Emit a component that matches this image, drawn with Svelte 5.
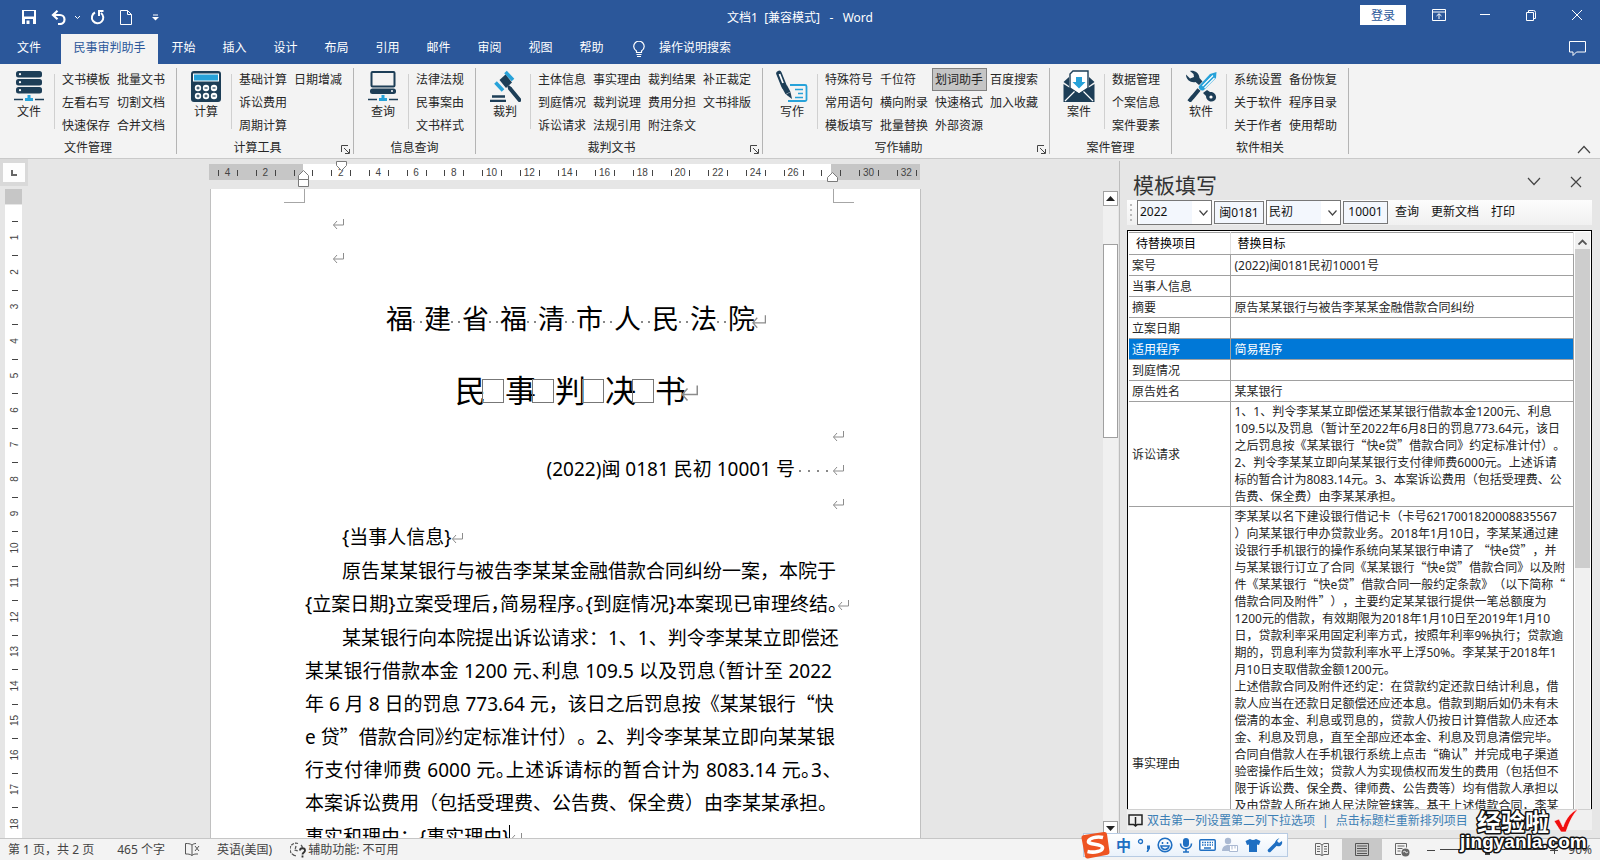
<script>
    const tabs = ['开始', '插入', '设计', '布局', '引用', '邮件', '审阅', '视图', '帮助']

    // columns are filled top to bottom, three commands each
    const groups = [
        {icon: 'server', name: '文件', title: '文件管理', items: ['文书模板', '左看右写', '快速保存', '批量文书', '切割文档', '合并文档']},
        {icon: 'calc', name: '计算', title: '计算工具', launcher: true, items: ['基础计算', '诉讼费用', '周期计算', '日期增减', '', '']},
        {icon: 'computer', name: '查询', title: '信息查询', items: ['法律法规', '民事案由', '文书样式']},
        {icon: 'gavel', name: '裁判', title: '裁判文书', launcher: true, items: ['主体信息', '到庭情况', '诉讼请求', '事实理由', '裁判说理', '法规引用', '裁判结果', '费用分担', '附注条文', '补正裁定', '文书排版', '']},
        {icon: 'pen', name: '写作', title: '写作辅助', launcher: true, items: ['特殊符号', '常用语句', '模板填写', '千位符', '横向附录', '批量替换', '划词助手', '快速格式', '外部资源', '百度搜索', '加入收藏', '']},
        {icon: 'mail', name: '案件', title: '案件管理', items: ['数据管理', '个案信息', '案件要素']},
        {icon: 'tools', name: '软件', title: '软件相关', items: ['系统设置', '关于软件', '关于作者', '备份恢复', '程序目录', '使用帮助']},
    ]

    const hMarks = []
    for (let i = -2; i <= 16; i++) hMarks.push({x: 94 + i * 37.7, n: Math.abs(i * 2)})
    const vMarks = []
    for (let i = 1; i <= 18; i++) vMarks.push({y: 14 + i * 34.5, n: i})

    // "~" before a punctuation mark sets it half width
    const claims = [
        '某某银行向本院提出诉讼请求：1、1、判令李某某立即偿还',
        '某某银行借款本金 1200 元~、利息 109.5 以及罚息~（暂计至 2022',
        '年 6 月 8 日的罚息 773.64 元，该日之后罚息按《某某银行“快',
        'e 贷”借款合同~》约定标准计付）。2、判令李某某立即向某某银',
        '行支付律师费 6000 元~。上述诉请标的暂合计为 8083.14 元~。3~、',
        '本案诉讼费用（包括受理费、公告费、保全费）由李某某承担。',
    ]

    const rows = [
        {key: '案号', lines: ['(2022)闽0181民初10001号']},
        {key: '当事人信息', lines: ['']},
        {key: '摘要', lines: ['原告某某银行与被告李某某金融借款合同纠纷']},
        {key: '立案日期', lines: ['']},
        {key: '适用程序', lines: ['简易程序']},
        {key: '到庭情况', lines: ['']},
        {key: '原告姓名', lines: ['某某银行']},
        {key: '诉讼请求', lines: [
            '1、1、判令李某某立即偿还某某银行借款本金1200元、利息',
            '109.5以及罚息（暂计至2022年6月8日的罚息773.64元，该日',
            '之后罚息按《某某银行“快e贷”借款合同》约定标准计付）。',
            '2、判令李某某立即向某某银行支付律师费6000元。上述诉请',
            '标的暂合计为8083.14元。3、本案诉讼费用（包括受理费、公',
            '告费、保全费）由李某某承担。']},
        {key: '事实理由', long: true, lines: [
            '李某某以名下建设银行借记卡（卡号6217001820008835567',
            '）向某某银行申办贷款业务。2018年1月10日，李某某通过建',
            '设银行手机银行的操作系统向某某银行申请了 “快e贷”，并',
            '与某某银行订立了合同《某某银行“快e贷”借款合同》以及附',
            '件《某某银行“快e贷”借款合同一般约定条款》（以下简称“',
            '借款合同及附件”），主要约定某某银行提供一笔总额度为',
            '1200元的借款，有效期限为2018年1月10日至2019年1月10',
            '日，贷款利率采用固定利率方式，按照年利率9%执行；贷款逾',
            '期的，罚息利率为贷款利率水平上浮50%。李某某于2018年1',
            '月10日支取借款金额1200元。',
            '上述借款合同及附件还约定：在贷款约定还款日结计利息，借',
            '款人应当在还款日足额偿还应还本息。借款到期后如仍未有未',
            '偿清的本金、利息或罚息的，贷款人仍按日计算借款人应还本',
            '金、利息及罚息，直至全部应还本金、利息及罚息清偿完毕。',
            '合同自借款人在手机银行系统上点击“确认”并完成电子渠道',
            '验密操作后生效；贷款人为实现债权而发生的费用（包括但不',
            '限于诉讼费、保全费、律师费、公告费等）均有借款人承担以',
            '及由贷款人所在地人民法院管辖等。基于上述借款合同，李某']},
    ]

    let helper = $state('划词助手')
    let selected = $state('适用程序')
    let year = $state('2022')
    let court = $state('闽0181')
    let kind = $state('民初')
    let number = $state('10001')
</script>

{#snippet rich(text)}{#each text.split(/(~.|[“”])/) as part}{#if part.startsWith('~')}<span class="half">{part.slice(1)}</span>{:else if part === '“' || part === '”'}<span class="cjk">{part}</span>{:else}{part}{/if}{/each}{/snippet}

{#snippet mark()}<svg class="mark" width="12" height="12" viewBox="0 0 12 12"><path d="M11.5 1v6H1.5M5 3 1.5 7 5 11" fill="none" stroke="#8c8c8c" /></svg>{/snippet}

{#snippet icon(name)}
    <svg width="32" height="32" viewBox="0 0 32 32">
        {#if name === 'server'}
            {#each [1, 9, 17] as y}
                <rect x="3" y={y} width="26" height="6.5" rx="2.5" fill="#1d3e57" />
                <circle cx="7" cy={y + 3.2} r="1.1" fill="#fff" />
            {/each}
            <path d="M1 29.5h9M22 29.5h9" stroke="#1d3e57" stroke-width="1.4" />
            <path d="M12 28h2.5v-3h3v3H20v3h-8z" fill="#27a2d9" />
        {:else if name === 'calc'}
            <rect x="1" y="1" width="30" height="31" rx="3" fill="#1d3e57" />
            <rect x="3.5" y="4" width="25" height="7" fill="#27a2d9" stroke="#fff" />
            {#each [8, 16, 24] as x}
                {#each [18, 26] as y}
                    <circle cx={x} cy={y} r="3.2" fill="#fff" />
                    <path d="M{x - 1.5} {y}h3" stroke="#1d3e57" stroke-width="1.2" />
                {/each}
            {/each}
            <path d="M8 16.5v3M8 24.5v3M16 24.5v3" stroke="#1d3e57" />
        {:else if name === 'computer'}
            <rect x="4.5" y="2" width="23" height="14.5" rx="1" fill="#f3f3f3" stroke="#1d3e57" stroke-width="2" />
            <rect x="3" y="18.5" width="26" height="5.5" rx="2.5" fill="#1d3e57" />
            <circle cx="25" cy="21" r="1" fill="#fff" />
            <path d="M1 29.5h9M22 29.5h9" stroke="#1d3e57" stroke-width="1.4" />
            <path d="M12 28h2.5v-3h3v3H20v3h-8z" fill="#27a2d9" />
        {:else if name === 'gavel'}
            <path d="M16.5 2l7.500 8M6.500 12.500l7.500 8" stroke="#27a2d9" stroke-width="3.6" />
            <path d="M10.500 10 16.500 4.500l6.500 8-6 5.500z" fill="#1d3e57" />
            <path d="M19 16l3 3" stroke="#1d3e57" stroke-width="2.5" />
            <path d="M21 18.500 30.500 30" stroke="#1d3e57" stroke-width="4" stroke-linecap="round" />
            <path d="M3 26.5h13M1 31h16" stroke="#1d3e57" stroke-width="2.6" />
        {:else if name === 'pen'}
            <path d="M14 15h15a1.5 1.5 0 0 1 1.5 1.5v13A1.5 1.5 0 0 1 29 31H12" fill="none" stroke="#27a2d9" stroke-width="1.8" />
            <path d="M19 19.5h8M22 23.5h5M19 27.5h8" stroke="#27a2d9" stroke-width="1.4" />
            <path d="M3 3.5 8 16" stroke="#1d3e57" stroke-width="5.6" stroke-linecap="round" />
            <path d="M3.500 4 7 13" stroke="#fff" stroke-width="1.8" />
            <path d="M8.500 16.500 12 23" stroke="#1d3e57" stroke-width="5.6" />
            <path d="M10 24.500 14.500 22l1.500 7z" fill="#1d3e57" />
        {:else if name === 'mail'}
            <path d="M.5 12 6 7v9zM31.500 12 26 7v9z" fill="#1d3e57" />
            <path d="M7 18V4l3-3h15v17l-9 6z" fill="#fff" stroke="#1d3e57" stroke-width="1.4" />
            <path d="M13 7h6v5h3.500L16 18.500 9.500 12H13z" fill="#27a2d9" />
            <path d="M.5 14 16 23.500 31.500 14v18H.5z" fill="#1d3e57" />
            <path d="M2 31l9.500-9.500M30 31l-9.500-9.500" stroke="#fff" stroke-width="1.2" />
        {:else}
            <path d="M5 1c4-1 9 1.500 9.500 7l3 3.500-3.500 3.500-3.500-3C6 13 1 10 1 4.500l4 4L9 7 8.500 4z" fill="#1d3e57" />
            <path d="M22 20 25 22c4-.5 6.500 3 6 6-.5 3-4 4.500-7 3s-3-5-3-5l-3-3z" fill="#1d3e57" />
            <circle cx="26" cy="27" r="1.600" fill="#fff" />
            <path d="M14 19.500 7 28M4 31.500l4-5" stroke="#1d3e57" stroke-width="4" />
            <path d="M14 16 25 4l6.500-2L31 8 19 20c-1.500 1-3 .5-4-.5s-1.800-2.200-1-3.500z" fill="#27a2d9" />
            <path d="M17.500 16 28 5.500M19.500 18 29.500 8" stroke="#fff" stroke-width="1.200" />
        {/if}
    </svg>
{/snippet}

<div class="window">
    <header class="titlebar">
        <div class="quick">
            <button aria-label="保存"><svg width="14" height="14" viewBox="0 0 14 14"><path d="M0 0h14v14H0z" fill="#fff" /><path d="M2 1h10v5.500H2zM3 9h8v5H3z" fill="#2b579a" /><path d="M4.500 10.500h3V14h-3z" fill="#fff" /></svg></button>
            <button aria-label="撤消"><svg width="16" height="15" viewBox="0 0 16 15"><path d="M2 5h7a4.500 4.500 0 0 1 0 9H7M6.500.8 2 5l4.500 4.200" fill="none" stroke="#fff" stroke-width="2.200" /></svg></button>
            <button class="small" aria-label="撤消列表"><svg width="7" height="5" viewBox="0 0 7 5"><path d="M1 1l2.500 2.500L6 1" fill="none" stroke="#fff" /></svg></button>
            <button aria-label="重复"><svg width="15" height="15" viewBox="0 0 15 15"><path d="M5 2.500A5.700 5.700 0 1 0 11 3" fill="none" stroke="#fff" stroke-width="2" /><path d="M8 1h5.500M9 0v6" stroke="#fff" stroke-width="2" /></svg></button>
            <button aria-label="新建"><svg width="12" height="15" viewBox="0 0 12 15"><path d="M.5.5h7l4 4v10H.5zM7.500.5v4h4" fill="none" stroke="#fff" /></svg></button>
            <button class="small" aria-label="自定义快速访问工具栏"><svg width="7" height="7" viewBox="0 0 7 7"><path d="M1 1h5" stroke="#fff" /><path d="M0 3h7L3.500 6.500z" fill="#fff" /></svg></button>
        </div>
        <div class="doc-name">文档1&nbsp; [兼容模式]&nbsp; &nbsp;-&nbsp; &nbsp;Word</div>
        <div class="win-buttons">
            <button class="login">登录</button>
            <button class="win" aria-label="功能区显示选项"><svg width="14" height="12" viewBox="0 0 14 12"><path d="M.5.5h13v11H.5zM.5 3h13M7 10V5M4.500 7 7 4.700 9.500 7" fill="none" stroke="#fff" /></svg></button>
            <button class="win" aria-label="最小化"><svg width="12" height="12" viewBox="0 0 12 12"><path d="M1 5.500h10" stroke="#fff" /></svg></button>
            <button class="win" aria-label="还原"><svg width="12" height="12" viewBox="0 0 12 12"><path d="M1.500 3.500h7v8h-7zM3.500 3.500v-2h5a2 2 0 0 1 2 2v6h-2" fill="none" stroke="#fff" /></svg></button>
            <button class="win" aria-label="关闭"><svg width="12" height="12" viewBox="0 0 12 12"><path d="M1 1l10 10M11 1 1 11" stroke="#fff" /></svg></button>
        </div>
    </header>

    <nav class="tabs">
        <button class="tab file">文件</button>
        <button class="tab active">民事审判助手</button>
        {#each tabs as tab}
            <button class="tab">{tab}</button>
        {/each}
        <button class="tell">
            <svg width="12" height="17" viewBox="0 0 12 17"><path d="M3.500 11.500v-1.500C1.500 8.500.7 7 .7 5.500a5.200 5.200 0 0 1 10.500 0C11.200 7 10.500 8.500 8.500 10v1.500zM3.500 13.500h5M4 15.500h4" fill="none" stroke="#fff" stroke-width="1.200" /></svg>
            <span>操作说明搜索</span>
        </button>
        <button class="comment" aria-label="批注"><svg width="17" height="15" viewBox="0 0 17 15"><path d="M.5.5h16v10.500h-9l-3.500 3.500v-3.500H.5z" fill="none" stroke="#fff" /></svg></button>
    </nav>

    <div class="ribbon">
        {#each groups as group}
            <section class="group">
                <div class="commands">
                    <button class="big">
                        {@render icon(group.icon)}
                        <span>{group.name}</span>
                    </button>
                    <div class="list">
                        {#each group.items as item}
                            {#if item}
                                <button class:on={item === helper} onclick={() => helper = item}>{item}</button>
                            {:else}
                                <span></span>
                            {/if}
                        {/each}
                    </div>
                </div>
                <div class="group-title">
                    <span>{group.title}</span>
                    {#if group.launcher}
                        <button aria-label="{group.title}选项"><svg width="9" height="9" viewBox="0 0 9 9"><path d="M.5 7V.5H7M3 3l5 5M8.500 4v4.500H4" fill="none" stroke="#444" /></svg></button>
                    {/if}
                </div>
            </section>
        {/each}
        <button class="collapse" aria-label="折叠功能区"><svg width="14" height="9" viewBox="0 0 14 9"><path d="M1 8l6-6.500L13 8" fill="none" stroke="#444" stroke-width="1.200" /></svg></button>
    </div>

    <main>
        <div class="side">
            <div class="tabstop"><div><svg width="6" height="6" viewBox="0 0 6 6"><path d="M1 0v5h5" fill="none" stroke="#666" stroke-width="2" /></svg></div></div>
            <svg class="vruler" width="17" height="649">
                <rect width="17" height="15" fill="#c6c6c6" />
                <rect y="16" width="17" height="633" fill="#fff" />
                {#each vMarks as m}
                    <path d="M7 {Math.round(m.y - 17) + 0.5}h6" stroke="#444" />
                    <text transform="translate(13 {m.y}) rotate(-90)">{m.n}</text>
                {/each}
            </svg>
        </div>

        <div class="center">
            <div class="hruler">
                <svg width="711" height="30">
                    <rect y="5" width="711" height="16" fill="#c6c6c6" />
                    <rect x="94" y="5" width="528" height="16" fill="#fff" />
                    {#each hMarks as m}
                        {#if m.n && m.n !== 28}<text x={m.x} y="17">{m.n}</text>{/if}
                        <path d="M{Math.round(m.x - 9.4) + 0.5} 11v6" stroke="#444" />
                        {#if m.x < 703}<path d="M{Math.round(m.x + 9.4) + 0.5} 11v6" stroke="#444" />{/if}
                    {/each}
                    <path d="M127.500 2.500h10v4l-5 5-5-5z" fill="#fff" stroke="#7a7a7a" />
                    <path d="M89.500 20.500v-4l5-5 5 5v4zM89.500 20.500h10v7h-10zM618.500 22.500v-4l5-5 5 5v4z" fill="#fff" stroke="#7a7a7a" />
                </svg>
            </div>
            <article class="page">
                <i class="corner left"></i>
                <i class="corner right"></i>
                <p class="lead">{@render mark()}</p>
                <p class="lead">{@render mark()}</p>
                <h1>{#each '福建省福清市人民法院' as c, i}{c}{#if i < 9}<span class="dots"><i></i><i></i></span>{/if}{/each}{@render mark()}</h1>
                <h2>{#each '民事判决书' as c, i}{c}{#if i < 4}<span class="blank"></span>{/if}{/each}{@render mark()}</h2>
                <p class="end">{@render mark()}</p>
                <p class="end">(2022)闽 0181 民初 10001 号<span class="dots wide"><i></i><i></i><i></i><i></i></span>{@render mark()}</p>
                <p class="end">{@render mark()}</p>
                <p class="indent">{'{当事人信息}'}{@render mark()}</p>
                <p>
                    <span class="line indent">原告某某银行与被告李某某金融借款合同纠纷一案，本院于</span>
                    <span class="line">{@render rich('{立案日期}立案受理后~，简易程序~。{到庭情况}本案现已审理终结~。')}{@render mark()}</span>
                </p>
                <p>
                    {#each claims as line, i}
                        <span class="line" class:indent={i === 0}>{@render rich(line)}</span>
                    {/each}
                </p>
                <p>事实和理由：{'{事实理由}'}<span class="caret"></span>{@render mark()}</p>
            </article>
        </div>

        <div class="scroll">
            <button aria-label="向上滚动"><svg width="9" height="5" viewBox="0 0 9 5"><path d="M0 5l4.500-5L9 5z" fill="#222" /></svg></button>
            <div class="track"><div class="thumb"></div></div>
            <button aria-label="向下滚动"><svg width="9" height="5" viewBox="0 0 9 5"><path d="M0 0l4.500 5L9 0z" fill="#222" /></svg></button>
        </div>

        <aside>
            <div class="pane-head">
                <h3>模板填写</h3>
                <button aria-label="任务窗格选项"><svg width="14" height="9" viewBox="0 0 14 9"><path d="M1 1l6 6.500L13 1" fill="none" stroke="#444" stroke-width="1.200" /></svg></button>
                <button aria-label="关闭窗格"><svg width="12" height="12" viewBox="0 0 12 12"><path d="M1 1l10 10M11 1 1 11" stroke="#444" stroke-width="1.200" /></svg></button>
            </div>
            <div class="pane-tools">
                <span class="grip"></span>
                <label class="combo">
                    <select aria-label="年份" bind:value={year}><option>2022</option><option>2021</option></select>
                    <svg width="9" height="6" viewBox="0 0 9 6"><path d="M.5.5l4 4.500 4-4.500" fill="none" stroke="#444" stroke-width="1.200" /></svg>
                </label>
                <input class="court" aria-label="法院代码" bind:value={court} />
                <label class="combo">
                    <select aria-label="案件类型" bind:value={kind}><option>民初</option><option>民终</option></select>
                    <svg width="9" height="6" viewBox="0 0 9 6"><path d="M.5.5l4 4.500 4-4.500" fill="none" stroke="#444" stroke-width="1.200" /></svg>
                </label>
                <input class="num" aria-label="案件序号" bind:value={number} />
                <button>查询</button>
                <button>更新文档</button>
                <button>打印</button>
            </div>
            <div class="grid">
                <div class="clip">
                    <table>
                        <thead>
                            <tr><th class="key">待替换项目</th><th>替换目标</th></tr>
                        </thead>
                        <tbody>
                            {#each rows as row}
                                <tr class:sel={row.key === selected} class:long={row.long} onclick={() => selected = row.key}>
                                    <td class="key">{row.key}</td>
                                    <td>
                                        {#each row.lines as line}
                                            <div>{@render rich(line)}</div>
                                        {/each}
                                    </td>
                                </tr>
                            {/each}
                        </tbody>
                    </table>
                </div>
                <div class="grid-scroll">
                    <svg width="9" height="6" viewBox="0 0 9 6"><path d="M.5 5.500l4-4 4 4" fill="none" stroke="#555" stroke-width="1.800" /></svg>
                    <div></div>
                </div>
            </div>
            <div class="hint">
                <svg width="15" height="13" viewBox="0 0 15 13"><path d="M1 1h13v9.500H9.500L7.500 12l-2-1.500H1zM7.500 3v9" fill="none" stroke="#222" stroke-width="1.500" /></svg>
                <a href="#options">双击第一列设置第二列下拉选项</a>
                <span>|</span>
                <a href="#sort">点击标题栏重新排列项目</a>
            </div>
        </aside>
    </main>

    <footer>
        <span class="pages">第 1 页，共 2 页</span>
        <span class="words">465 个字</span>
        <svg class="proof" width="15" height="13" viewBox="0 0 15 13"><path d="M7 2v10.500M7 2C5 .5 3 .5.5.5v10.500c2.500 0 4.500 0 6.500 1.500M7 2C8 1 9.500.5 11 .5M7 12.500c1-1 2.500-1.500 4-1.500h2M10 3l4 5M14 3l-4 5" fill="none" stroke="#555" /></svg>
        <span class="lang">英语(美国)</span>
        <svg class="access" width="17" height="16" viewBox="0 0 17 16"><path d="M8 1.500A6 6 0 0 0 4 13M6 4l-1 4 3 1M11 3c1 1 1.500 2 1.500 3M3 13l3 1" fill="none" stroke="#555" stroke-width="1.300" stroke-dasharray="3 1" /><path d="M10 8.500c0-3 5-3 5 0 0 2-2.500 2-2.500 4M12.500 13.500v2" fill="none" stroke="#333" stroke-width="1.800" /></svg>
        <span>辅助功能: 不可用</span>
        <div class="views">
            <button aria-label="阅读视图"><svg width="14" height="13" viewBox="0 0 14 13"><path d="M7 2v10.500M.5.5H5l2 1.500L9 .5h4.500v11H9l-2 1-2-1H.5zM2 3.500h3M2 6h3M2 8.500h3M9 3.500h3M9 6h3M9 8.500h3" fill="none" stroke="#666" /></svg></button>
            <button class="current" aria-label="页面视图"><svg width="14" height="13" viewBox="0 0 14 13"><path d="M.5.5h13v12H.5zM2 3h10M2 5.500h10M2 8h10M2 10.500h10" fill="none" stroke="#555" /></svg></button>
            <button aria-label="Web 版式视图"><svg width="15" height="14" viewBox="0 0 15 14"><path d="M6 11.500H.5V.5h11v4M2.500 3h7M2.500 5.500h5M2.500 8h3" fill="none" stroke="#666" /><circle cx="10.500" cy="9.500" r="4" fill="#666" /><path d="M8 9l2-1 1 2 2-1" fill="none" stroke="#ddd" /></svg></button>
        </div>
        <button class="zoom-step" aria-label="缩小"><svg width="8" height="8" viewBox="0 0 8 8"><path d="M0 4.500h8" stroke="#444" /></svg></button>
        <input type="range" aria-label="显示比例" min="0" max="200" value="90" />
        <button class="zoom-step" aria-label="放大"><svg width="8" height="8" viewBox="0 0 8 8"><path d="M0 4.500h8M4.500 0v8" stroke="#444" /></svg></button>
        <span class="percent">90%</span>
    </footer>

    <div class="ime">
        <svg class="sogou" width="30" height="28" viewBox="0 0 30 28">
            <path d="M4 4 24 1q2.500-.4 3 2l2.500 18q.3 2.300-2 2.800L8 27.500q-2.500.4-3-2L1.500 7q-.3-2.500 2.500-3z" fill="#ee5422" />
            <path d="M23 6.500C17 5 9 7 8.500 10.500S22 12.500 22.500 16.500 14 22 7.500 20.500" fill="none" stroke="#fff" stroke-width="3.600" />
        </svg>
        <b>中</b>
        <svg width="14" height="14" viewBox="0 0 14 14"><circle cx="3.500" cy="3.500" r="2" fill="none" stroke="#1f6fc2" stroke-width="1.300" /><path d="M10 7.500h3v3L11 14H9.500l1-3H10z" fill="#1f6fc2" /></svg>
        <svg width="16" height="16" viewBox="0 0 16 16"><circle cx="8" cy="8" r="6.800" fill="none" stroke="#1f6fc2" stroke-width="1.600" /><path d="M5.500 5v2M10.500 5v2M4 9c1 4.500 7 4.500 8 0z" fill="none" stroke="#1f6fc2" stroke-width="1.500" /></svg>
        <svg width="14" height="16" viewBox="0 0 14 16"><rect x="4" y="1" width="6" height="9" rx="3" fill="#1f6fc2" /><path d="M1.500 6.500c0 7 11 7 11 0M7 12v3M4 15h6" fill="none" stroke="#1f6fc2" stroke-width="1.600" /></svg>
        <svg width="17" height="12" viewBox="0 0 17 12"><rect x=".8" y=".8" width="15.400" height="10.400" rx="1" fill="#fff" stroke="#1f6fc2" stroke-width="1.500" /><path d="M3 3.500h11M3 6h11" stroke="#1f6fc2" stroke-width="1.500" stroke-dasharray="1.500 1" /><path d="M5 9h7" stroke="#1f6fc2" stroke-width="1.500" /></svg>
        <svg width="17" height="16" viewBox="0 0 17 16"><circle cx="6" cy="4" r="3.200" fill="#aab9d2" /><path d="M0 14c0-8 12-8 12 0z" fill="#aab9d2" /><path d="M7.500 8.500h8v6h-8zM10 8.500v4M13 8.500v3" fill="#fff" stroke="#aab9d2" /></svg>
        <svg width="16" height="14" viewBox="0 0 16 14"><path d="M5 1q3 2 6 0l4.500 2-1.500 4-2-.5V14H4V6.500L2 7 .5 3z" fill="#1f6fc2" /></svg>
        <svg width="16" height="16" viewBox="0 0 16 16"><path d="M2.500 13.500 9 7" stroke="#1f6fc2" stroke-width="3.500" stroke-linecap="round" /><path d="M12.500 1 10 4l2 2 3-2c1 4-2 6-5 5S7 3 12.500 1z" fill="#1f6fc2" /></svg>
    </div>

    <svg class="brand" width="132" height="46" viewBox="0 0 132 46">
        <text x="19" y="22" class="cn">经验啦</text>
        <path d="M96 12l5-2 4 8c3-9 8-15 15-18-6 7-9 14-12 23h-5z" fill="#f01010" stroke="#fff" stroke-width=".6" />
        <text x="2" y="39" class="site">jingyanla.com</text>
    </svg>
</div>

<style>
    :global(body) {
        margin: 0;
    }

    .window {
        position: relative;
        display: flex;
        flex-direction: column;
        height: 100vh;
        overflow: hidden;
        background: #e6e6e6;
        color: #262626;
        font-family: "Noto Sans", "Noto Sans CJK SC", sans-serif;
        font-size: 12px;
        line-height: 17px;
        text-spacing-trim: space-all;
    }

    button {
        display: flex;
        align-items: center;
        justify-content: center;
        padding: 0;
        border: 0;
        background: none;
        color: inherit;
        font: inherit;
        white-space: nowrap;
    }

    /* a zero line height keeps the second font from making the lines taller */
    .cjk,
    .half {
        font-family: "Noto Sans CJK SC", sans-serif;
        line-height: 0;
    }

    .half {
        font-feature-settings: "halt";
    }

    /* title bar and tabs */
    .titlebar {
        display: grid;
        grid-template-columns: 1fr auto 1fr;
        align-items: center;
        height: 34px;
        background: #2b579a;
        color: #fff;
    }

    .quick {
        display: flex;
        align-items: center;
        gap: 15px;
        padding-left: 22px;
    }

    .quick .small {
        margin: 0 -6px 0 -8px;
    }

    .quick .small:last-child {
        margin-left: 5px;
    }

    .win-buttons {
        display: flex;
        align-items: center;
        justify-content: flex-end;
        height: 30px;
        align-self: start;
    }

    .login {
        width: 46px;
        height: 20px;
        margin-right: 10px;
        background: #fff;
        color: #2b579a;
    }

    .win {
        width: 46px;
        height: 30px;
    }

    .tabs {
        display: flex;
        height: 30px;
        background: #2b579a;
        color: #fff;
    }

    .tab {
        width: 51px;
        padding-bottom: 3px;
    }

    .tab.file {
        width: 61px;
        padding-right: 3px;
    }

    .tab.active {
        width: 97px;
        background: #f3f3f3;
        color: #2b579a;
    }

    .tell {
        gap: 14px;
        margin-left: 16px;
    }

    .tell span {
        padding-bottom: 3px;
    }

    .comment {
        margin: 0 14px 2px auto;
    }

    /* ribbon */
    .ribbon {
        display: flex;
        height: 94px;
        border-bottom: 1px solid #c9c9c9;
        background: #f3f3f3;
    }

    .group {
        height: 86px;
        margin-top: 4px;
        padding-right: 7px;
        border-right: 1px solid #b4b4b4;
    }

    .commands {
        display: flex;
        height: 69px;
    }

    .big {
        flex-direction: column;
        justify-content: flex-start;
        width: 50px;
        height: 56px;
        margin: 2px 4px 0 4px;
        gap: 1px;
    }

    .big span {
        line-height: 18px;
    }

    .list {
        position: relative;
        display: grid;
        grid-auto-flow: column;
        grid-template-rows: repeat(3, 23px);
        grid-auto-columns: 55px;
        padding-left: 1px;
    }

    .list::before {
        content: "";
        position: absolute;
        left: -4px;
        top: 6px;
        bottom: 8px;
        border-left: 1px solid #d0d0d0;
    }

    .list button {
        justify-content: flex-start;
        padding: 0 2px 1px;
        border: 1px solid transparent;
    }

    .list .on {
        border-color: #808080;
        background: #c5c5c5;
    }

    .group-title {
        display: flex;
        height: 17px;
        line-height: 22px;
    }

    .group-title span {
        flex: 1;
        margin-right: -7px;
        text-align: center;
    }

    .group-title button {
        width: 15px;
        padding-top: 8px;
        margin-right: -7px;
        margin-left: 7px;
    }

    .collapse {
        align-self: flex-end;
        margin: 0 9px 4px auto;
    }

    /* document */
    main {
        display: flex;
        flex: 1;
        min-height: 0;
    }

    .side {
        display: flex;
        flex-direction: column;
        width: 28px;
        overflow: hidden;
    }

    .tabstop {
        padding: 4px 3px;
        margin-bottom: 3px;
        background: #d9d9d9;
    }

    .tabstop div {
        display: flex;
        align-items: center;
        justify-content: center;
        height: 19px;
        background: #fdfdfd;
    }

    .vruler {
        flex: none;
        margin-left: 5px;
    }

    .vruler text,
    .hruler text {
        fill: #444;
        font-family: "Liberation Sans", sans-serif;
        font-size: 10px;
        text-anchor: middle;
    }

    .center {
        display: flex;
        flex: 1;
        flex-direction: column;
        align-items: center;
        overflow: hidden;
    }

    .hruler {
        height: 30px;
        margin-right: 2px;
    }

    .page {
        position: relative;
        box-sizing: border-box;
        flex: 1;
        width: 711px;
        min-height: 0;
        padding: 18px 88px 0 94px;
        overflow: hidden;
        border-left: 1px solid #c0c0c0;
        border-right: 1px solid #c0c0c0;
        background: #fff;
        color: #000;
        font-size: 19px;
        line-height: 33px;
        white-space: nowrap;
    }

    .corner {
        position: absolute;
        top: 0;
        width: 20px;
        height: 13px;
        border-bottom: 1px solid #a6a6a6;
    }

    .corner.left {
        left: 73px;
        border-right: 1px solid #a6a6a6;
    }

    .corner.right {
        right: 66px;
        border-left: 1px solid #a6a6a6;
    }

    .page p {
        margin: 0 0 1px;
        min-height: 33px;
    }

    .page .lead {
        padding-left: 27px;
    }

    .page .end {
        text-align: right;
    }

    .line {
        display: block;
        text-align-last: justify;
    }

    .indent {
        padding-left: 37px;
    }

    .mark {
        margin-right: -12px;
    }

    h1,
    h2 {
        margin: 0;
        padding-left: 4px;
        font-weight: 400;
        text-align: center;
    }

    h1 {
        font-size: 27px;
        line-height: 88px;
    }

    h2 {
        font-size: 31px;
        line-height: 54px;
        padding-bottom: 2px;
    }

    h1 .mark {
        width: 15px;
        height: 15px;
        margin: 0 -11px 0 -4px;
    }

    h2 .mark {
        width: 18px;
        height: 18px;
        margin: 0 -12px 0 -6px;
    }

    .dots {
        display: inline-flex;
        gap: 5px;
        padding-right: 2px;
        vertical-align: middle;
    }

    .dots i {
        width: 2px;
        height: 2px;
        background: #888;
    }

    .dots.wide {
        gap: 7px;
        padding: 0 4px;
    }

    .blank {
        display: inline-block;
        box-sizing: border-box;
        width: 22px;
        height: 24px;
        margin: 0 1px 6px -4px;
        border: 1px solid #777;
        vertical-align: middle;
    }

    .caret {
        display: inline-block;
        height: 28px;
        border-left: 1px solid #000;
        vertical-align: middle;
    }

    .scroll {
        display: flex;
        flex-direction: column;
        width: 15px;
        margin: 32px 1px 2px 0;
    }

    .scroll button {
        height: 15px;
        border: 1px solid #a0a0a0;
        background: #fff;
    }

    .track {
        display: flow-root;
        flex: 1;
        background: #f0f0f0;
    }

    .thumb {
        box-sizing: border-box;
        height: 194px;
        margin-top: 38px;
        border: 1px solid #a0a0a0;
        background: #fff;
    }

    /* task pane */
    aside {
        display: flex;
        flex-direction: column;
        box-sizing: border-box;
        width: 481px;
        margin-top: 2px;
        padding: 0 8px 8px 7px;
        border-left: 1px solid #bdbdbd;
    }

    .pane-head {
        display: flex;
        align-items: center;
        gap: 29px;
        height: 39px;
        padding-right: 10px;
    }

    .pane-head button {
        padding-top: 2px;
    }

    h3 {
        flex: 1;
        margin: 8px 0 0 6px;
        color: #333;
        font-size: 21px;
        font-weight: 400;
        line-height: 26px;
    }

    .pane-tools {
        display: flex;
        align-items: center;
        gap: 2px;
        height: 25px;
        background: linear-gradient(#fdfdfd, #f0f0f0);
        color: #111;
    }

    .grip {
        width: 2px;
        height: 17px;
        margin: 0 3px;
        background: repeating-linear-gradient(#bbb 0 2px, transparent 2px 5px);
    }

    .combo {
        position: relative;
        width: 75px;
    }

    .combo svg {
        position: absolute;
        right: 4px;
        top: 10px;
        pointer-events: none;
    }

    select,
    .pane-tools input {
        box-sizing: border-box;
        width: 100%;
        height: 25px;
        padding: 0 2px 2px;
        border: 1px solid #777;
        border-radius: 0;
        background: #fff;
        color: #111;
        font: inherit;
        appearance: none;
    }

    select {
        display: block;
        background: linear-gradient(90deg, #fff 2px, #f3f7fd 2px 54px, #fff 54px);
    }

    .pane-tools input {
        height: 23px;
        background: #f3f7fd;
        text-align: center;
    }

    .pane-tools .court {
        width: 50px;
    }

    .pane-tools .num {
        width: 45px;
    }

    .pane-tools button {
        padding: 0 5px 2px;
    }

    .grid {
        display: flex;
        flex: 1;
        min-height: 0;
        margin-top: 5px;
        padding: 1px 0 0 1px;
        border: 1px solid #000;
        border-bottom: 0;
        background: #fff;
    }

    .clip {
        flex: 1;
        overflow: hidden;
    }

    table {
        width: 100%;
        border-collapse: collapse;
        table-layout: fixed;
    }

    th,
    td {
        box-sizing: border-box;
        height: 21px;
        padding: 1px 0 1px 4px;
        border: 1px solid #a0a0a0;
        font-weight: 400;
        text-align: left;
        white-space: nowrap;
    }

    td:first-child,
    th:first-child {
        border-left: 0;
    }

    td.key {
        padding-left: 3px;
    }

    th {
        height: 22px;
        padding: 0 0 1px 7px;
        border-right-color: #e0e0e0;
        border-left-color: #e0e0e0;
        color: #000;
    }

    .key {
        width: 101px;
    }

    .sel {
        background: #0078d7;
        color: #fff;
    }

    .long td {
        height: 514px;
    }

    .long td:last-child {
        vertical-align: top;
    }

    .grid-scroll {
        width: 15px;
        margin: 0 1px;
        background: #f0f0f0;
        text-align: center;
    }

    .grid-scroll div {
        height: 319px;
        background: #cdcdcd;
    }

    .hint {
        display: flex;
        align-items: center;
        gap: 4px;
        height: 20px;
        padding-left: 1px;
        border-top: 1px solid #d0d0d0;
        background: #f0f0f0;
        color: #3d7fb5;
    }

    .hint a {
        color: inherit;
        text-decoration: none;
    }

    .hint span {
        margin: 0 3px;
    }

    /* status bar */
    footer {
        display: flex;
        align-items: center;
        box-sizing: border-box;
        height: 22px;
        padding: 0 8px;
        border-top: 1px solid #c6c6c6;
        background: #f3f3f3;
        color: #444;
    }

    .words {
        margin: 0 20px 0 23px;
    }

    .lang {
        margin: 0 18px 0 17px;
    }

    .access {
        margin-right: 1px;
    }

    .views {
        display: flex;
        align-self: stretch;
        margin-left: auto;
    }

    .views button {
        width: 40px;
    }

    .views .current {
        background: #c8c8c8;
    }

    .zoom-step {
        margin-left: 5px;
    }

    footer input {
        width: 105px;
        height: 12px;
        margin: 0 0 0 5px;
        background: linear-gradient(#444, #444) center / 100% 1px no-repeat;
        appearance: none;
    }

    footer input::-webkit-slider-thumb {
        width: 5px;
        height: 11px;
        background: #444;
        appearance: none;
    }

    .percent {
        margin-left: 10px;
    }

    /* input method bar floating over the status bar */
    .ime {
        position: absolute;
        right: 312px;
        bottom: 3px;
        display: flex;
        align-items: center;
        gap: 6px;
        box-sizing: border-box;
        height: 24px;
        padding: 0 4px 0 0;
        border: 1px solid #b7cbe3;
        background: linear-gradient(#fff, #eaf2fb);
    }

    .ime b {
        color: #1f6fc2;
        font-size: 15px;
    }

    .sogou {
        margin-left: -4px;
    }

    .brand {
        position: absolute;
        right: 10px;
        bottom: 5px;
    }

    .brand text {
        fill: #fff;
        stroke: #111;
        stroke-width: 3px;
        stroke-linejoin: round;
        paint-order: stroke;
        font-weight: 700;
    }

    .brand .cn {
        font-family: "Noto Sans CJK SC", sans-serif;
        font-size: 24px;
    }

    .brand .site {
        font-family: "Liberation Sans", sans-serif;
        font-size: 19px;
    }
</style>
